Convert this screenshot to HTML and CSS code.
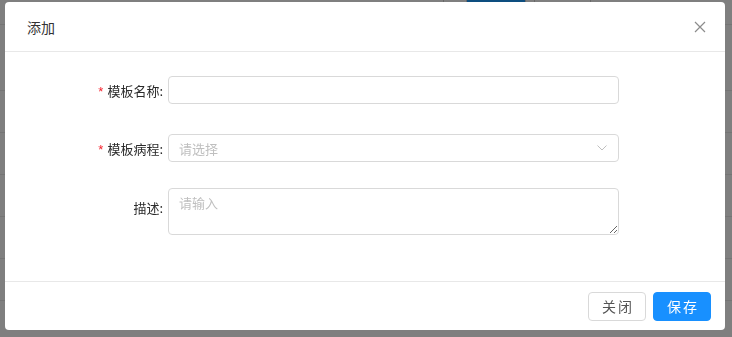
FILE: index.html
```html
<!DOCTYPE html>
<html lang="zh-CN">
<head>
    <meta charset="UTF-8">
    <meta name="viewport" content="width=device-width, initial-scale=1.0">
    <title>模板管理</title>
    <link rel="stylesheet" href="styles.css">
</head>
<body>

<!-- page behind the modal -->
<div class="page">
    <div class="top-tabs">
        <div class="tab tab-first"></div>
        <div class="tab tab-a"></div>
        <div class="tab tab-active"></div>
        <div class="tab tab-b"></div>
        <div class="tab tab-c"></div>
    </div>
    <div class="table">
        <div class="table-head"></div>
        <div class="table-row tall"></div>
        <div class="table-row"></div>
        <div class="table-row"></div>
        <div class="table-row"></div>
        <div class="table-row"></div>
        <div class="table-row"></div>
    </div>
</div>

<div class="mask"></div>

<div class="modal">
    <div class="modal-header">
        <span class="modal-title">添加</span>
        <span class="modal-close">
            <svg width="12" height="12" viewBox="0 0 12 12">
                <path d="M1 1 L11 11 M11 1 L1 11" stroke="#8c8c8c" stroke-width="1.2" fill="none"/>
            </svg>
        </span>
    </div>

    <form class="modal-body" id="templateForm">
        <div class="form-row row-name">
            <label class="form-label required" for="tplName">模板名称:</label>
            <input class="form-input" type="text" id="tplName" name="tplName">
        </div>
        <div class="form-row row-course">
            <label class="form-label required">模板病程:</label>
            <div class="form-select">
                <span class="placeholder">请选择</span>
                <svg class="select-arrow" width="10" height="6" viewBox="0 0 10 6">
                    <path d="M0.5 0.5 L5 5 L9.5 0.5" stroke="#bfbfbf" stroke-width="1" fill="none"/>
                </svg>
            </div>
        </div>
        <div class="form-row row-desc">
            <label class="form-label" for="tplDesc">描述:</label>
            <textarea class="form-textarea" id="tplDesc" name="tplDesc" placeholder="请输入"></textarea>
        </div>
    </form>

    <div class="modal-footer">
        <button type="button" class="btn">关闭</button>
        <button type="button" class="btn btn-primary">保存</button>
    </div>
</div>

</body>
</html>
```

FILE: styles.css
```css
body {
    margin: 0;
    width: 732px;
    height: 337px;
    overflow: hidden;
    font-family: "Noto Sans CJK SC", "Noto Sans", sans-serif;
    background-color: #fff;
}
.page {
    width: 732px;
}
.top-tabs {
    display: flex;
    height: 2px;
}
.tab {
    border-right: 1px solid #d0d0d0;
    background-color: #fff;
}
.tab-first {
    width: 443px;
}
.tab-a {
    width: 22px;
}
.tab-active {
    width: 58px;
    background-color: #1a9cff;
    border-right: none;
}
.tab-b {
    width: 8px;
    border-left: 1px solid #d0d0d0;
}
.tab-c {
    width: 55px;
}
.table-head {
    height: 22px;
    border-bottom: 1px solid #e8e8e8;
}
.table-row {
    height: 41px;
    border-bottom: 1px solid #e8e8e8;
}
.table-row.tall {
    height: 65px;
}
.mask {
    position: fixed;
    top: 0;
    left: 0;
    right: 0;
    bottom: 0;
    background-color: rgba(0, 0, 0, 0.5);
}
.modal {
    position: fixed;
    top: 2px;
    left: 5px;
    width: 720px;
    height: 328px;
    background-color: #fff;
    border-radius: 4px;
    display: flex;
    flex-direction: column;
}
.modal-header {
    height: 49px;
    border-bottom: 1px solid #e8e8e8;
    display: flex;
    align-items: center;
    justify-content: space-between;
    padding: 0 19px 0 22px;
}
.modal-title {
    font-size: 14px;
    color: #333;
}
.modal-close {
    display: flex;
    margin-top: 1px;
}
.modal-body {
    flex: 1;
    padding-top: 24px;
    margin: 0;
}
.form-row {
    display: flex;
    align-items: center;
}
.row-name {
    margin-bottom: 30px;
}
.row-course {
    margin-bottom: 26px;
}
.row-desc {
    align-items: flex-start;
}
.form-label {
    width: 163px;
    padding-right: 5px;
    box-sizing: border-box;
    text-align: right;
    font-size: 13px;
    color: #2b2b2b;
}
.row-desc .form-label {
    margin-top: 10px;
}
.form-label.required::before {
    content: "*";
    color: #f5222d;
    margin-right: 4px;
    font-family: SimSun, "Liberation Sans", sans-serif;
    font-size: 13px;
}
.form-input,
.form-select,
.form-textarea {
    width: 451px;
    box-sizing: border-box;
    border: 1px solid #d9d9d9;
    border-radius: 4px;
    font-family: "Noto Sans CJK SC", sans-serif;
    font-size: 13px;
    color: #333;
    margin: 0;
}
.form-input {
    height: 28px;
    padding: 0 10px;
    outline: none;
}
.form-select {
    height: 28px;
    padding: 0 11px 0 10px;
    display: flex;
    align-items: center;
    justify-content: space-between;
}
.placeholder {
    color: #bfbfbf;
}
.form-textarea {
    height: 47px;
    padding: 4px 10px;
    resize: vertical;
    outline: none;
}
.form-textarea::placeholder {
    color: #bfbfbf;
}
.modal-footer {
    border-top: 1px solid #e8e8e8;
    height: 48px;
    display: flex;
    justify-content: flex-end;
    align-items: center;
    gap: 7px;
    padding: 0 14px 0 0;
}
.btn {
    width: 58px;
    height: 29px;
    border: 1px solid #d9d9d9;
    border-radius: 4px;
    background-color: #fff;
    color: #555;
    font-family: "Noto Sans CJK SC", sans-serif;
    font-size: 14px;
    letter-spacing: 2px;
    padding: 0 0 0 2px;
    cursor: pointer;
}
.btn-primary {
    background-color: #1890ff;
    border-color: #1890ff;
    color: #fff;
}
```
